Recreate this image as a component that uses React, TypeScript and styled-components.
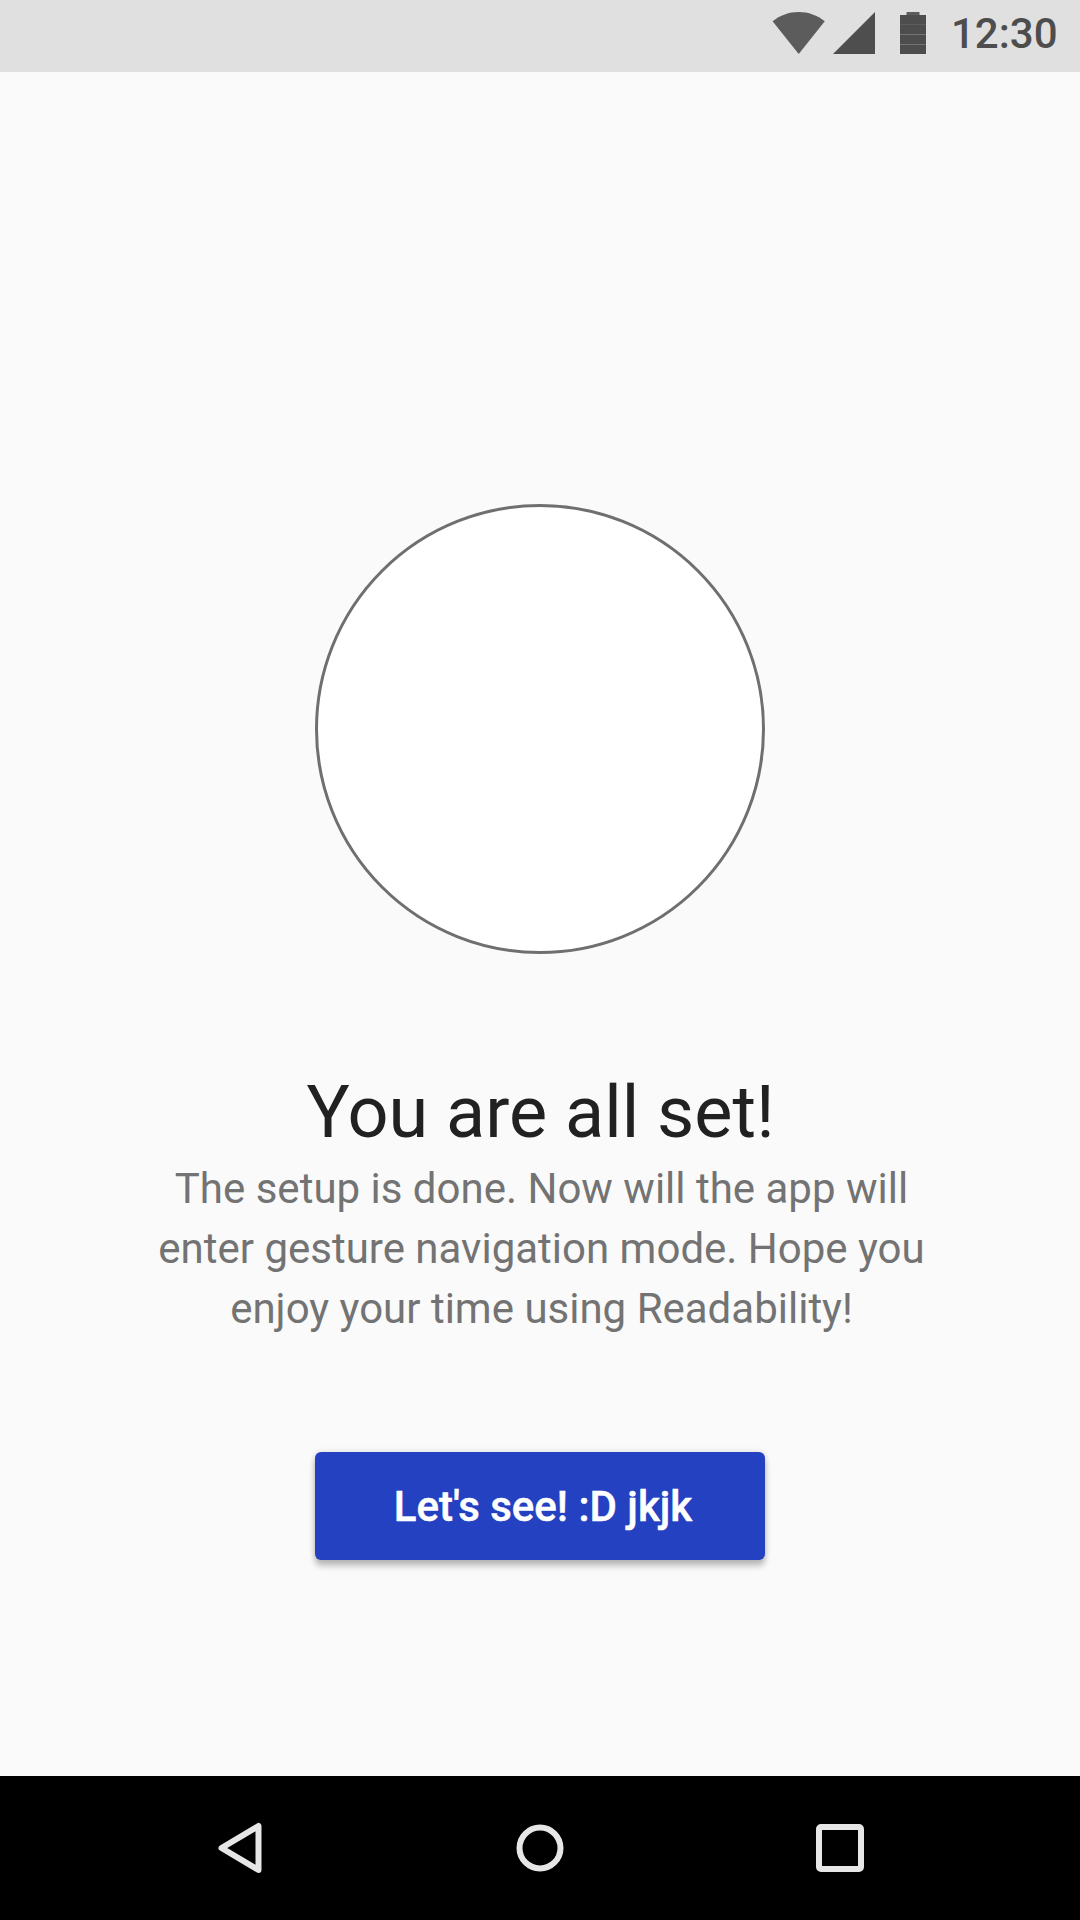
import React from 'react';
import styled, { createGlobalStyle } from 'styled-components';

const GlobalStyle = createGlobalStyle`
  *, *::before, *::after { box-sizing: border-box; }
  body { margin: 0; background: #fafafa; font-family: Roboto, sans-serif; }
`;

const Screen = styled.div`
  width: 1080px;
  height: 1920px;
  display: flex;
  flex-direction: column;
  overflow: hidden;
  background: #fafafa;
`;

const StatusBar = styled.header`
  height: 72px;
  flex: none;
  display: flex;
  align-items: flex-start;
  justify-content: flex-end;
  padding-top: 12px;
  background: #e0e0e0;
`;

const StatusIcon = styled.svg<{ $gap: number }>`
  display: block;
  flex: none;
  margin-right: ${(p) => p.$gap}px;
`;

const Clock = styled.time`
  width: 131px;
  margin-top: -2px;
  padding-right: 22.5px;
  display: flex;
  justify-content: flex-end;
  font-size: 42px;
  font-weight: 500;
  line-height: 48px;
  color: #4d4d4d;
`;

const Content = styled.main`
  flex: 1;
  display: flex;
  flex-direction: column;
  align-items: center;
  padding-top: 432px;
`;

const Illustration = styled.div`
  width: 450px;
  height: 450px;
  flex: none;
  border: 3px solid #6f6f6f;
  border-radius: 50%;
  background: #fff;
`;

const Title = styled.h1`
  margin: 117px 0 0;
  padding-left: 1px;
  font-size: 72px;
  font-weight: 400;
  line-height: 84px;
  color: #212121;
  white-space: nowrap;
`;

const Description = styled.p`
  margin: 4px 0 0;
  padding-left: 3px;
  font-size: 42px;
  line-height: 60px;
  color: #737373;
  text-align: center;
  white-space: nowrap;
`;

const Line = styled.span`
  display: block;
`;

const PrimaryButton = styled.button`
  width: 450px;
  height: 108px;
  margin: 113px 0 0;
  padding: 2px 0 0 6px;
  border: 0;
  border-radius: 6px;
  background: #2341c1;
  box-shadow: 0 6px 6px rgba(0, 0, 0, 0.24), 0 0 6px rgba(0, 0, 0, 0.12);
  font: 500 42px/48px Roboto, sans-serif;
  -webkit-text-stroke: 0.5px #fff;
  color: #fff;
`;

const NavBar = styled.nav`
  height: 144px;
  flex: none;
  display: flex;
  align-items: center;
  justify-content: center;
  gap: 228px;
  background: #000;
`;

const NavButton = styled.button`
  width: 72px;
  height: 72px;
  padding: 0;
  border: 0;
  background: none;
`;

const NavIcon = styled.svg`
  display: block;
  fill: none;
  stroke: #e6e6e6;
  stroke-width: 6;
  stroke-linejoin: round;
`;

export default function App() {
  return (
    <Screen>
      <GlobalStyle />
      <StatusBar>
        <StatusIcon $gap={7} width="54" height="42" viewBox="0 0 54 42">
          <path d="M0.6 9.3C8 3.3 17 0 26.7 0s18.7 3.3 26.1 9.3L26.7 42z" fill="#5c5c5c" />
        </StatusIcon>
        <StatusIcon $gap={25} width="42" height="42" viewBox="0 0 42 42">
          <path d="M0 42L42 0v42z" fill="#4e4e4e" />
        </StatusIcon>
        <StatusIcon $gap={23} width="26" height="42" viewBox="0 0 26 42">
          <path d="M6.5 0h13v3H6.5z" fill="#5c5c5c" />
          <path d="M0 3h26v39H0z" fill="#4d4d4d" />
          <path d="M0 12h26v1H0z" fill="#5c5c5c" />
          <path d="M0 22h26v1H0zM0 32h26v1H0z" fill="#737373" />
        </StatusIcon>
        <Clock>12:30</Clock>
      </StatusBar>
      <Content>
        <Illustration />
        <Title>You are all set!</Title>
        <Description>
          <Line>The setup is done. Now will the app will</Line>
          <Line>enter gesture navigation mode. Hope you</Line>
          <Line>enjoy your time using Readability!</Line>
        </Description>
        <PrimaryButton>Let's see! :D jkjk</PrimaryButton>
      </Content>
      <NavBar>
        <NavButton aria-label="Back">
          <NavIcon width="72" height="72" viewBox="0 0 72 72">
            <path d="M54.5 14v44L17.5 36z" />
          </NavIcon>
        </NavButton>
        <NavButton aria-label="Home">
          <NavIcon width="72" height="72" viewBox="0 0 72 72">
            <circle cx="36" cy="36" r="20.5" />
          </NavIcon>
        </NavButton>
        <NavButton aria-label="Recent apps">
          <NavIcon width="72" height="72" viewBox="0 0 72 72">
            <rect x="15" y="15" width="42" height="42" rx="2" />
          </NavIcon>
        </NavButton>
      </NavBar>
    </Screen>
  );
}
